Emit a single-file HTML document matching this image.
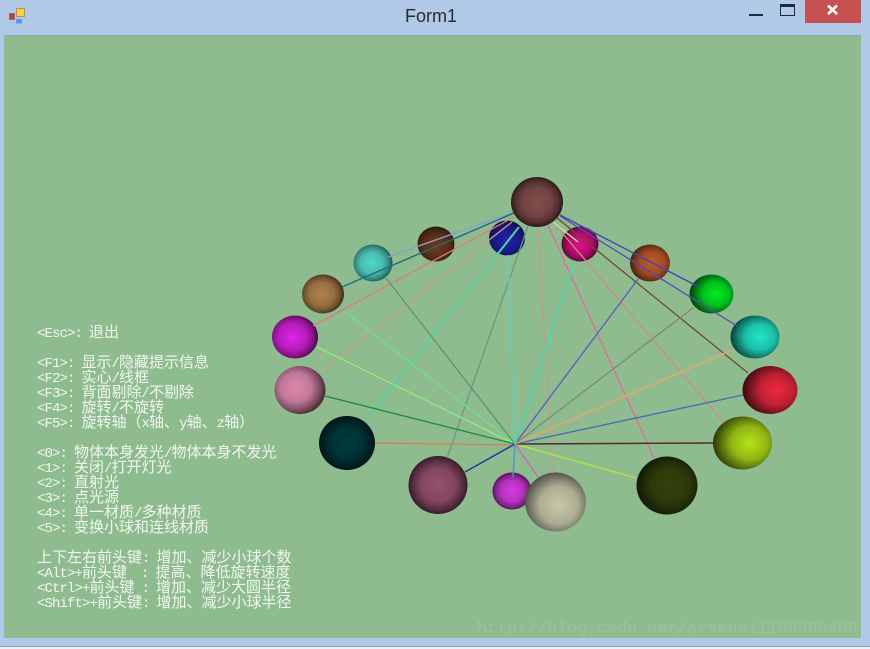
<!DOCTYPE html>
<html><head><meta charset="utf-8"><style>
html,body{margin:0;padding:0}
body{width:870px;height:649px;position:relative;overflow:hidden;background:#afc9e7}
#title{position:absolute;left:331px;width:200px;text-align:center;top:6px;font:18px/20px "Liberation Sans",sans-serif;color:#2a2a2a}
#client{position:absolute;left:4px;top:36px;width:857px;height:602px;background:#8fbc8f;box-shadow:0 -1px 0 #8ea8c4}
#bot{position:absolute;left:0;top:646px;width:870px;height:3px;background:#eef2f6;border-top:1px solid #8a9bb0;box-sizing:border-box}
#close{position:absolute;left:805px;top:0;width:56px;height:22.500px;background:#c75050}
#text{position:absolute;left:0;top:0;color:#f2f7f1;font-family:"Liberation Mono","WenQuanYi Zen Hei","Noto Sans CJK SC",monospace;filter:blur(.25px)}
.l{position:absolute;left:37px;white-space:pre;font-size:14px;letter-spacing:-.9px;line-height:16px;word-spacing:-.5px}
.l b{font:normal 15px/16px "WenQuanYi Zen Hei","Noto Sans CJK SC",sans-serif;word-spacing:0;letter-spacing:0}
#wm{position:absolute;left:477px;top:620px;font:16.700px/20px "Liberation Mono",monospace;color:#98c497;white-space:pre;filter:blur(.3px)}
svg{position:absolute;left:0;top:0}
#scene{filter:blur(.35px)}
</style></head><body>
<div id="client"></div>
<div id="bot"></div>
<div id="close"></div>
<div id="title">Form1</div>
<svg width="870" height="649" viewBox="0 0 870 649" xmlns="http://www.w3.org/2000/svg">
<defs>
<radialGradient id="a1" cx=".5" cy=".5" r=".5"><stop offset="0" stop-color="#834c4c"/><stop offset=".55" stop-color="#744343"/><stop offset=".82" stop-color="#54302f"/><stop offset="1" stop-color="#2c1a1a"/></radialGradient>
<radialGradient id="a2" cx=".5" cy=".55" r=".55"><stop offset="0" stop-color="#2420b0"/><stop offset=".55" stop-color="#1c1a8c"/><stop offset=".82" stop-color="#151468"/><stop offset="1" stop-color="#0c0b40"/></radialGradient>
<radialGradient id="a3" cx=".5" cy=".5" r=".52"><stop offset="0" stop-color="#e01088"/><stop offset=".55" stop-color="#b80c70"/><stop offset=".82" stop-color="#840a50"/><stop offset="1" stop-color="#400628"/></radialGradient>
<radialGradient id="a4" cx=".5" cy=".55" r=".55"><stop offset="0" stop-color="#6e3a1c"/><stop offset=".55" stop-color="#5c3018"/><stop offset=".82" stop-color="#432312"/><stop offset="1" stop-color="#26140c"/></radialGradient>
<radialGradient id="a5" cx=".55" cy=".5" r=".55"><stop offset="0" stop-color="#c05a28"/><stop offset=".55" stop-color="#a44c22"/><stop offset=".82" stop-color="#703418"/><stop offset="1" stop-color="#3e1e10"/></radialGradient>
<radialGradient id="a6" cx=".47" cy=".5" r=".53"><stop offset="0" stop-color="#50d8c4"/><stop offset=".55" stop-color="#48bcac"/><stop offset=".82" stop-color="#348a7e"/><stop offset="1" stop-color="#1c5a52"/></radialGradient>
<radialGradient id="a7" cx=".47" cy=".5" r=".53"><stop offset="0" stop-color="#b0804c"/><stop offset=".55" stop-color="#9a7042"/><stop offset=".82" stop-color="#6e5030"/><stop offset="1" stop-color="#3a2c1c"/></radialGradient>
<radialGradient id="a8" cx=".6" cy=".5" r=".6"><stop offset="0" stop-color="#00ee20"/><stop offset=".5" stop-color="#00c01c"/><stop offset=".78" stop-color="#007812"/><stop offset="1" stop-color="#014008"/></radialGradient>
<radialGradient id="a9" cx=".45" cy=".5" r=".55"><stop offset="0" stop-color="#e024e8"/><stop offset=".55" stop-color="#b81cbc"/><stop offset=".82" stop-color="#801482"/><stop offset="1" stop-color="#450a48"/></radialGradient>
<radialGradient id="a10" cx=".6" cy=".5" r=".6"><stop offset="0" stop-color="#20e8c8"/><stop offset=".5" stop-color="#1cc0a8"/><stop offset=".78" stop-color="#107a6c"/><stop offset="1" stop-color="#073e38"/></radialGradient>
<radialGradient id="a11" cx=".42" cy=".45" r=".6"><stop offset="0" stop-color="#dc88a8"/><stop offset=".5" stop-color="#c0789a"/><stop offset=".78" stop-color="#7e4f63"/><stop offset="1" stop-color="#40252f"/></radialGradient>
<radialGradient id="a12" cx=".62" cy=".5" r=".62"><stop offset="0" stop-color="#ee2840"/><stop offset=".5" stop-color="#c02034"/><stop offset=".78" stop-color="#761420"/><stop offset="1" stop-color="#380a10"/></radialGradient>
<radialGradient id="a13" cx=".5" cy=".5" r=".5"><stop offset="0" stop-color="#003c3e"/><stop offset=".55" stop-color="#003236"/><stop offset=".82" stop-color="#002225"/><stop offset="1" stop-color="#001618"/></radialGradient>
<radialGradient id="a14" cx=".62" cy=".5" r=".62"><stop offset="0" stop-color="#b4e418"/><stop offset=".5" stop-color="#90b414"/><stop offset=".78" stop-color="#56700e"/><stop offset="1" stop-color="#2c3606"/></radialGradient>
<radialGradient id="a15" cx=".5" cy=".5" r=".52"><stop offset="0" stop-color="#96506c"/><stop offset=".55" stop-color="#844660"/><stop offset=".82" stop-color="#552d3e"/><stop offset="1" stop-color="#2e1822"/></radialGradient>
<radialGradient id="a16" cx=".55" cy=".5" r=".55"><stop offset="0" stop-color="#32420a"/><stop offset=".55" stop-color="#2c3a0a"/><stop offset=".82" stop-color="#1c2608"/><stop offset="1" stop-color="#111806"/></radialGradient>
<radialGradient id="a17" cx=".5" cy=".5" r=".52"><stop offset="0" stop-color="#d83ce0"/><stop offset=".55" stop-color="#b832c0"/><stop offset=".82" stop-color="#80238a"/><stop offset="1" stop-color="#44124a"/></radialGradient>
<radialGradient id="a18" cx=".55" cy=".55" r=".58"><stop offset="0" stop-color="#c8c8a8"/><stop offset=".55" stop-color="#acac92"/><stop offset=".8" stop-color="#76766a"/><stop offset="1" stop-color="#4a4a40"/></radialGradient>
</defs>
<!-- window icon -->
<rect x="9.500" y="13.500" width="5" height="6" fill="#c23a3a" stroke="#9a6a6a"/>
<rect x="16.500" y="8.500" width="8" height="8" fill="#f4cf50" stroke="#b99a3a"/>
<rect x="16" y="19" width="6" height="4.500" fill="#5a98ea"/>
<!-- window buttons -->
<rect x="749" y="14" width="14" height="2" fill="#1d2a3a"/>
<rect x="780.500" y="4.500" width="14" height="11" fill="none" stroke="#1d2a3a"/>
<rect x="780" y="4" width="15" height="3" fill="#1d2a3a"/>
<path d="M828 5.500L837 14M837 5.500L828 14" stroke="#fff" stroke-width="2.600" fill="none"/>
<g id="scene">
<!-- spheres -->
<ellipse cx="507" cy="238" rx="18" ry="17.500" fill="url(#a2)"/>
<ellipse cx="580" cy="244" rx="18.500" ry="17.500" fill="url(#a3)"/>
<ellipse cx="436" cy="244" rx="18.500" ry="17.500" fill="url(#a4)"/>
<ellipse cx="650" cy="263" rx="20" ry="18.500" fill="url(#a5)"/>
<ellipse cx="373" cy="263" rx="19.500" ry="18.500" fill="url(#a6)"/>
<ellipse cx="323" cy="294" rx="21" ry="19.500" fill="url(#a7)"/>
<ellipse cx="711.500" cy="294" rx="22" ry="19.500" fill="url(#a8)"/>
<ellipse cx="295" cy="337" rx="23" ry="21.500" fill="url(#a9)"/>
<ellipse cx="755" cy="337" rx="24.500" ry="21.500" fill="url(#a10)"/>
<ellipse cx="300" cy="390" rx="25.500" ry="24" fill="url(#a11)"/>
<ellipse cx="770" cy="390" rx="27.500" ry="24" fill="url(#a12)"/>
<ellipse cx="347" cy="443" rx="28" ry="27" fill="url(#a13)"/>
<ellipse cx="742.500" cy="443" rx="29.500" ry="26.500" fill="url(#a14)"/>
<ellipse cx="438" cy="485" rx="29.500" ry="29" fill="url(#a15)"/>
<ellipse cx="667" cy="485.500" rx="30.500" ry="29" fill="url(#a16)"/>
<ellipse cx="512" cy="491" rx="19.500" ry="18.500" fill="url(#a17)"/>
<ellipse cx="555.500" cy="502" rx="30.500" ry="29.500" fill="url(#a18)"/>
<!-- lines from top sphere -->
<g fill="none" stroke-width="1.300">
<path d="M514 212L388 257" stroke="#8a9ed0"/>
<path d="M514 213L342 287" stroke="#1f6a80" stroke-width="1.400"/>
<path d="M514 217L313 326" stroke="#e07a7a"/>
<path d="M512 222L322 371" stroke="#c8a090"/>
<path d="M519 227L365 421" stroke="#58d0a0" stroke-width="2"/>
<path d="M528 226L447 458" stroke="#6a9a78"/>
<path d="M538 226L553 473" stroke="#c49a88"/>
<path d="M547 223L654 458" stroke="#e06a98"/>
<path d="M552 221L724 423" stroke="#d08a88"/>
<path d="M557 218L748 373" stroke="#6e4a30"/>
<path d="M560 216L737 326" stroke="#5a4ab0"/>
<path d="M560 215L699 287" stroke="#3a48b8" stroke-width="1.400"/>
<path d="M553 222L578 242" stroke="#c8e8a0" stroke-width="1.300"/>
</g>
<!-- hub lines -->
<g fill="none" stroke-width="1.300">
<path d="M345 312L515 444" stroke="#72dc92"/>
<path d="M386 278L515 444" stroke="#4f9a76"/>
<path d="M317 347L515 444" stroke="#8cf080"/>
<path d="M325 396L515 444" stroke="#1f8a3c"/>
<path d="M375 443L515 445" stroke="#d0805a"/>
<path d="M465 472L515 444" stroke="#1a3aa8" stroke-width="1.500"/>
<path d="M508 255L515 444" stroke="#60d0c0"/>
<path d="M515 444L513 477" stroke="#4a98c8" stroke-width="1.500"/>
<path d="M515 444L538 477" stroke="#d060c0"/>
<path d="M515 444L636 478" stroke="#b0e840"/>
<path d="M515 444L713 443" stroke="#5a2a2a" stroke-width="1.500"/>
<path d="M515 444L743 395" stroke="#4a68b0"/>
<path d="M515 444L732 350" stroke="#e0a870" stroke-width="1.500"/>
<path d="M515 444L693 308" stroke="#7a8a78"/>
<path d="M515 444L638 279" stroke="#5a5ac0"/>
<path d="M515 444L574 262" stroke="#58d0a8" stroke-width="2"/>
</g>
<ellipse cx="537" cy="202" rx="26" ry="25" fill="url(#a1)"/>
</g>
</svg>
<div id="text">
<div class="l" style="top:324px">&lt;Esc&gt;: <b>退出</b></div>
<div class="l" style="top:354px">&lt;F1&gt;: <b>显示</b>/<b>隐藏提示信息</b></div>
<div class="l" style="top:369px">&lt;F2&gt;: <b>实心</b>/<b>线框</b></div>
<div class="l" style="top:384px">&lt;F3&gt;: <b>背面剔除</b>/<b>不剔除</b></div>
<div class="l" style="top:399px">&lt;F4&gt;: <b>旋转</b>/<b>不旋转</b></div>
<div class="l" style="top:414px">&lt;F5&gt;: <b>旋转轴（</b>x<b>轴、</b>y<b>轴、</b>z<b>轴）</b></div>
<div class="l" style="top:444px">&lt;0&gt;: <b>物体本身发光</b>/<b>物体本身不发光</b></div>
<div class="l" style="top:459px">&lt;1&gt;: <b>关闭</b>/<b>打开灯光</b></div>
<div class="l" style="top:474px">&lt;2&gt;: <b>直射光</b></div>
<div class="l" style="top:489px">&lt;3&gt;: <b>点光源</b></div>
<div class="l" style="top:504px">&lt;4&gt;: <b>单一材质</b>/<b>多种材质</b></div>
<div class="l" style="top:519px">&lt;5&gt;: <b>变换小球和连线材质</b></div>
<div class="l" style="top:549px"><b>上下左右前头键</b>: <b>增加、减少小球个数</b></div>
<div class="l" style="top:564px">&lt;Alt&gt;+<b>前头键</b>  : <b>提高、降低旋转速度</b></div>
<div class="l" style="top:579px">&lt;Ctrl&gt;+<b>前头键</b> : <b>增加、减少大圆半径</b></div>
<div class="l" style="top:594px">&lt;Shift&gt;+<b>前头键</b>: <b>增加、减少小球半径</b></div>
</div>
<div id="wm">http://blog.csdn.net/arsenal1109389480</div>
</body></html>
